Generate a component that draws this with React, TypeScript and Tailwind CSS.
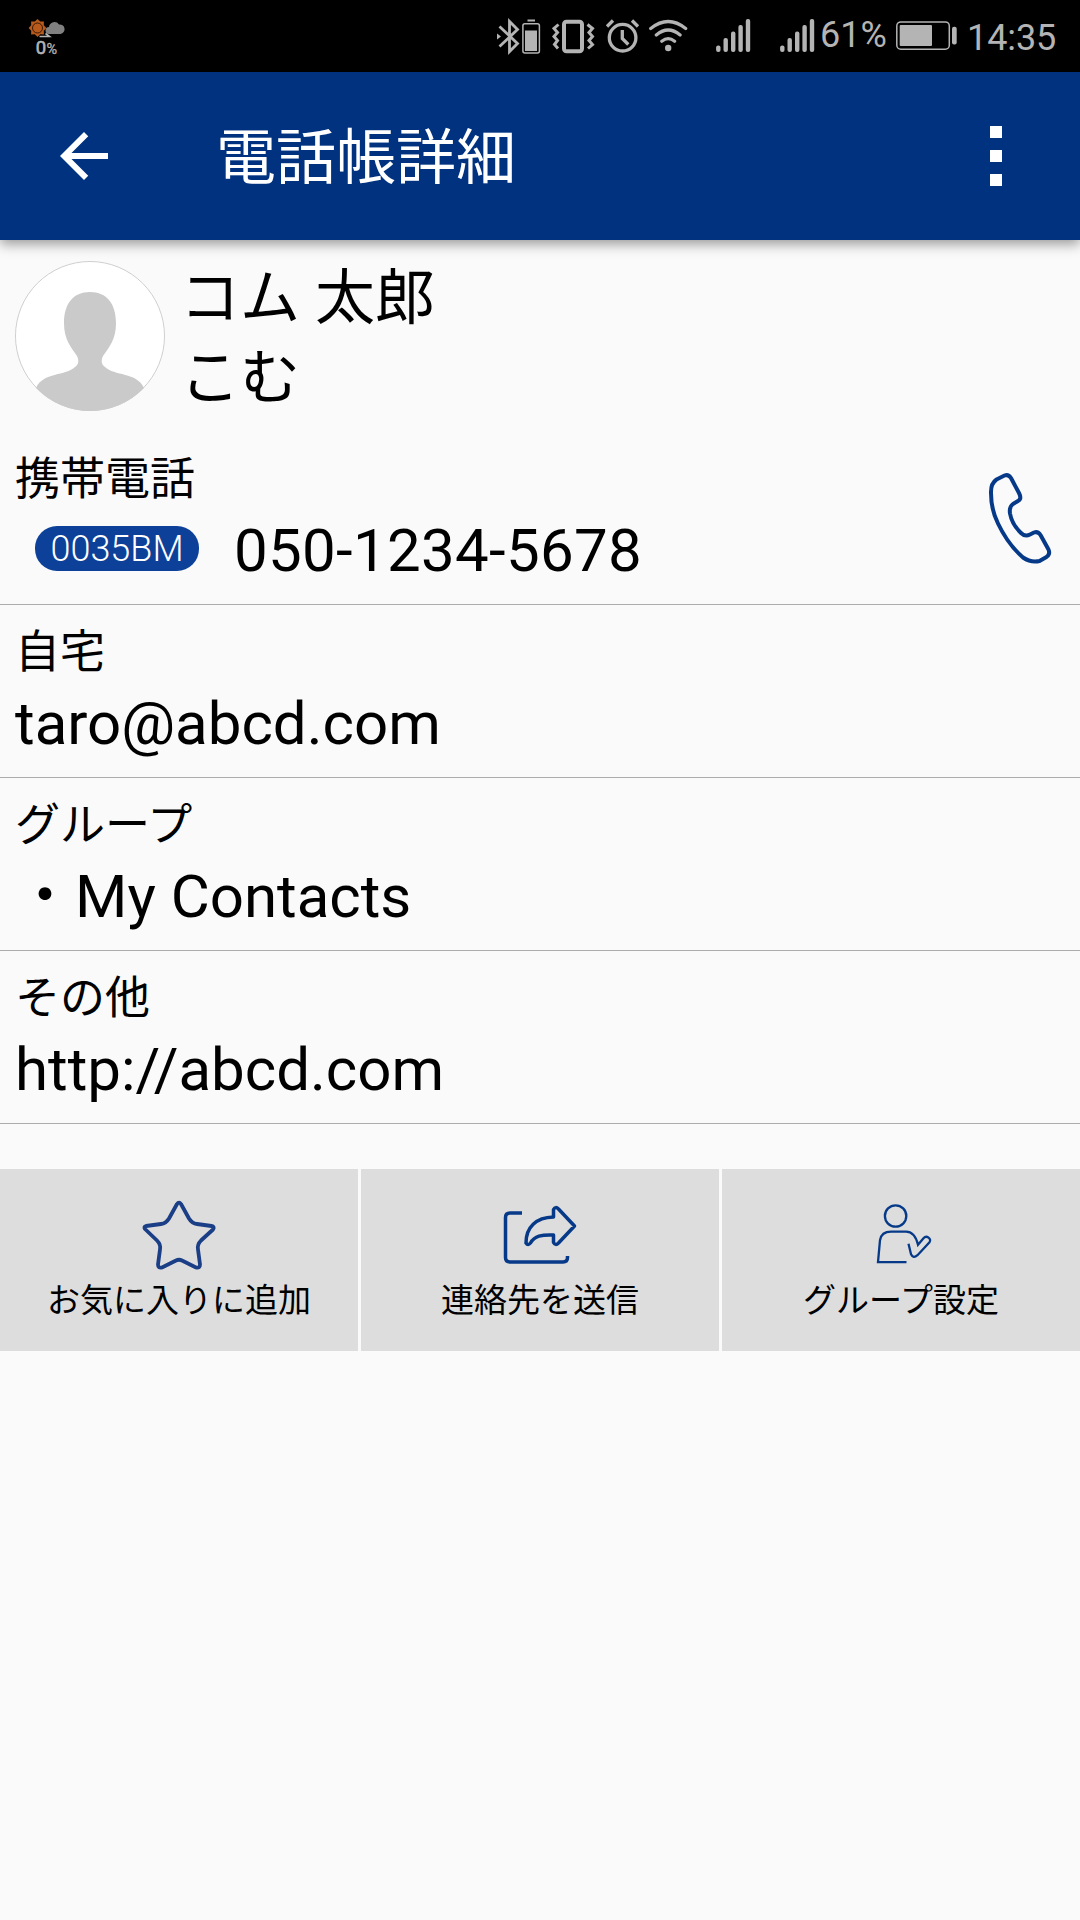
import type { ReactNode } from "react";

const signalBars = [
  { x: 2.3, top: 27.5 },
  { x: 9.7, top: 20 },
  { x: 17.2, top: 13.5 },
  { x: 24.6, top: 7 },
  { x: 32, top: 1 }
];

const details = [
  { label: "自宅", value: "taro@abcd.com" },
  { label: "グループ", value: "・My Contacts" },
  { label: "その他", value: "http://abcd.com" }
];

function WeatherIcon() {
  return (
    <svg className="h-[48px] w-[38px] overflow-visible" viewBox="28 17 38 48">
      <path d="M37.5 19l2.7 2.6 3.7-.1-.1 3.8 2.6 2.7-2.6 2.7.1 3.7-3.7-.1-2.7 2.6-2.7-2.6-3.7.1.1-3.7-2.6-2.7 2.6-2.7-.1-3.8 3.7.1z" fill="#b75a1c" />
      <circle cx="37.5" cy="28" r="5" fill="#b75a1c" stroke="#3a1c08" strokeWidth="1" />
      <path d="M49 34a3.5 3.5 0 0 1 0-7 5.5 5.5 0 0 1 10-2.5A4.7 4.7 0 0 1 60.5 34z" fill="#808080" />
      <path d="M39.5 36.5h10l-4-3" fill="none" stroke="#b4b4b4" strokeWidth="1.6" />
      <text x="35.7" y="53.7" fontSize="18.5" fill="#b4b4b4" stroke="#b4b4b4" strokeWidth=".6" className="font-['Roboto',sans-serif]">0</text>
      <text x="46.6" y="53.7" fontSize="14.5" fill="#b4b4b4" stroke="#b4b4b4" strokeWidth=".3" className="font-['Roboto',sans-serif]">%</text>
    </svg>
  );
}

function BluetoothIcon() {
  return (
    <svg className="h-[40px] w-[46px]" viewBox="496 17 46 40" fill="none" stroke="#b4b4b4">
      <path d="M499.5 26.5l18 17-8 8V21.5l8 8-18 17" strokeWidth="2.8" />
      <path d="M497 33.5v6l4-3z" fill="#b4b4b4" stroke="none" />
      <rect x="522.9" y="23.7" width="16.5" height="29.2" rx="2" strokeWidth="1.5" />
      <path d="M527.5 20.5h7.5" strokeWidth="2" />
      <rect x="525" y="30.5" width="12" height="20.5" fill="#b4b4b4" stroke="none" />
    </svg>
  );
}

function VibrateIcon() {
  return (
    <svg className="h-[40px] w-[44px]" viewBox="551 17 44 40" fill="none" stroke="#b4b4b4" strokeWidth="3">
      <rect x="564" y="21.8" width="18" height="29.5" rx="2.5" strokeWidth="4" />
      <path d="M558.5 24.5l-4.5 4 3.5 4-3.5 4 3.5 4-3 4 3.5 4M587.5 24.5l5 4-3.5 4 3.5 4-3.5 4 3.5 4-4.5 4" />
    </svg>
  );
}

function AlarmIcon() {
  return (
    <svg className="h-[40px] w-[36px]" viewBox="605 17 36 40" fill="none" stroke="#b4b4b4" strokeWidth="3.3">
      <circle cx="622.6" cy="37.7" r="13.3" />
      <path d="M622.3 30v8.5l6 6M607 26.5l6-6M632 20.5l6 6" />
    </svg>
  );
}

function WifiIcon() {
  return (
    <svg className="h-[40px] w-[42px]" viewBox="647 17 42 40" fill="none" stroke="#b4b4b4" strokeWidth="3.2" strokeLinecap="round">
      <path d="M650.7 28.5q17.5-14 35 0M656.3 35q11.9-10 23.8 0M661.8 41.2q6.4-5 12.8 0" />
      <circle cx="668.2" cy="48" r="3.2" fill="#b4b4b4" stroke="none" />
    </svg>
  );
}

function SignalIcon() {
  return (
    <svg className="h-[34px] w-[35px]" viewBox="0 0 35 34" fill="#b4b4b4">
      {signalBars.map((bar) => (
        <rect key={bar.x} x={bar.x - 2.2} y={bar.top} width="4.4" height={34 - bar.top} rx="2" />
      ))}
    </svg>
  );
}

function BatteryIcon() {
  return (
    <svg className="h-[30px] w-[62px]" viewBox="896 21 62 30">
      <rect x="896.8" y="21.9" width="52.5" height="27.3" rx="4" fill="none" stroke="#b4b4b4" strokeWidth="1.5" />
      <rect x="899.7" y="25" width="32.3" height="21" rx="1" fill="#b4b4b4" />
      <rect x="952" y="26.7" width="4.7" height="17.8" rx="2" fill="#b4b4b4" />
    </svg>
  );
}

function StatusBar() {
  return (
    <div className="flex h-[72px] bg-black text-[36px] leading-[40px] text-[#b4b4b4]">
      <div className="ml-[28px] mt-[17px]"><WeatherIcon /></div>
      <div className="ml-[430px] mt-[17px] flex">
        <BluetoothIcon />
        <div className="ml-[9px]"><VibrateIcon /></div>
        <div className="ml-[10px]"><AlarmIcon /></div>
        <div className="ml-[6px]"><WifiIcon /></div>
      </div>
      <div className="ml-[27px] mt-[18px]"><SignalIcon /></div>
      <div className="ml-[29px] mt-[18px]"><SignalIcon /></div>
      <span className="ml-[5px] mt-[15px] w-[76px] whitespace-nowrap">61%</span>
      <div className="mt-[21px]"><BatteryIcon /></div>
      <span className="ml-[9px] mt-[18px] whitespace-nowrap tracking-[-0.1px]">14:35</span>
    </div>
  );
}

function AppBar() {
  return (
    <header className="relative flex h-[168px] items-center bg-[#00327f] text-white shadow-[0_4px_12px_rgba(0,0,0,0.4)]">
      <svg className="ml-[60px] h-[48px] w-[48px]" viewBox="0 0 16 16" fill="#fff">
        <path d="M16 7H3.830l5.590-5.590L8 0 0 8l8 8 1.410-1.410L3.830 9H16z" />
      </svg>
      <h1 className="ml-[108px] pt-[5px] text-[60px] leading-[72px]">電話帳詳細</h1>
      <div className="ml-auto mr-[78px] flex flex-col gap-3">
        <span className="size-3 bg-white" />
        <span className="size-3 bg-white" />
        <span className="size-3 bg-white" />
      </div>
    </header>
  );
}

function Avatar() {
  return (
    <svg className="size-[150px]" viewBox="0 0 150 150">
      <circle cx="75" cy="75" r="74.5" fill="#fff" stroke="#cfcfcf" />
      <path d="M75 31C58 31 49 43 49 62c0 17 7 24 13 33 2 4 2 8-2 11-9 9-32 5-39 21a75 75 0 0 0 108 0c-7-16-30-12-39-21-4-3-4-7-2-11 6-9 13-16 13-33 0-19-9-31-26-31z" fill="#cacaca" />
    </svg>
  );
}

function PhoneIcon() {
  return (
    <svg className="h-[92px] w-[66px]" viewBox="987 472 66 92" fill="none" stroke="#063a89" strokeWidth="4" strokeLinejoin="round">
      <path d="M995.5 479.5l8-4q4-1.500 6.500 2.500l8 15q3 6-1 8l-5 3q-4 3-3 9.500 2 11 11 19.500 4 4 9 1.500l4-2q4-1.500 6.500 2.500l8 14.500q2 4.500-2 7.500l-7 4q-8.500 2-16.500-3.500-15-13-25-34-7-14-7-30.500-.300-9.500 5.500-13.500z" />
    </svg>
  );
}

function StarIcon() {
  return (
    <svg className="h-[72px] w-[76px]" viewBox="141 1198.5 76 72" fill="none" stroke="#1b3f86" strokeWidth="3.8" strokeLinejoin="round">
      <path d="M177 1203.500q2-2.800 4 0l8 14.500q3 5 8 5.500l14.500 2q3.500.500 1.500 3.500L201 1240q-4 4-3 9l2 15q0 4-4 3l-14-7q-3-1.500-6 0l-14 7q-4 1-4-3l2-15q1-5-3-9l-12-11.500q-1.500-2.500 1-3l15-2q5-.500 8-5.500z" />
    </svg>
  );
}

function ShareIcon() {
  return (
    <svg className="h-[64px] w-[76px]" viewBox="502 1203 76 64" fill="none" stroke="#063a89" strokeWidth="3.5" strokeLinejoin="round">
      <path d="M522 1213h-12q-4.500 0-4.500 4.500v40q0 4.500 4.500 4.500h53q4.500 0 4.500-4.500V1256" />
      <path d="M553.500 1217v-7.500q2-3.500 5-.500l16 17-16 17q-3 3-5-.500v-7.500c-12-.500-19 1-23 8q-2.500 3-4.500 0c0-16 10-25.500 27.500-26z" />
    </svg>
  );
}

function GroupIcon() {
  return (
    <svg className="ml-[7px] h-[64px] w-[60px]" viewBox="875 1203 60 64" fill="none" stroke="#063a89" strokeWidth="2.3">
      <circle cx="895.6" cy="1216" r="10.7" />
      <path d="M906.500 1262.200h-28.500l2-22c1-6 5-8.500 11-8.500h15c6 0 10 5 12 13l5.500-6.500c3-3.500 8.500.500 6 4l-12 13c-3 2.500-5 2-6.500-1l-2.500-10.500" />
    </svg>
  );
}

function Row({ label, children, icon }: { label: string; children: ReactNode; icon?: ReactNode }) {
  return (
    <section className="flex h-[173px] items-start justify-between border-b border-[#acacac] px-[15px] pt-[21px]">
      <div>
        <h2 className="text-[45px] leading-[54px]">{label}</h2>
        <div className="mt-[9px] flex text-[60px] leading-[70px]">{children}</div>
      </div>
      {icon}
    </section>
  );
}

function Action({ label, icon }: { label: string; icon: ReactNode }) {
  return (
    <button className="flex h-[182px] flex-col items-center bg-[#dddddd] pt-[28px]">
      <span className="flex h-[76px] items-center">{icon}</span>
      <span className="mt-[6px] text-[33px] leading-[44px]">{label}</span>
    </button>
  );
}

export default function App() {
  return (
    <main lang="ja" className="h-[1920px] w-[1080px] bg-[#fafafa] font-['Roboto','Noto_Sans_CJK_JP',sans-serif] text-black">
      <StatusBar />
      <AppBar />
      <section className="flex h-[192px] pl-[15px] pt-[21px]">
        <Avatar />
        <div className="-mt-[2px] ml-[15px] text-[60px] leading-[80px]">
          <p>コム 太郎</p>
          <p>こむ</p>
        </div>
      </section>
      <Row label="携帯電話" icon={<div className="mr-[11px] mt-[19px]"><PhoneIcon /></div>}>
        <span className="ml-[20px] mr-[35px] mt-[10px] flex h-[45px] w-[164px] items-center justify-center rounded-[22px] bg-[#0d4199] text-[36px] font-light leading-none text-white">0035BM</span>
        <span className="tracking-[0.3px]">050-1234-5678</span>
      </Row>
      {details.map((item) => (
        <Row key={item.label} label={item.label}>{item.value}</Row>
      ))}
      <div className="mt-[45px] grid grid-cols-3 gap-[3px]">
        <Action label="お気に入りに追加" icon={<StarIcon />} />
        <Action label="連絡先を送信" icon={<ShareIcon />} />
        <Action label="グループ設定" icon={<GroupIcon />} />
      </div>
    </main>
  );
}
